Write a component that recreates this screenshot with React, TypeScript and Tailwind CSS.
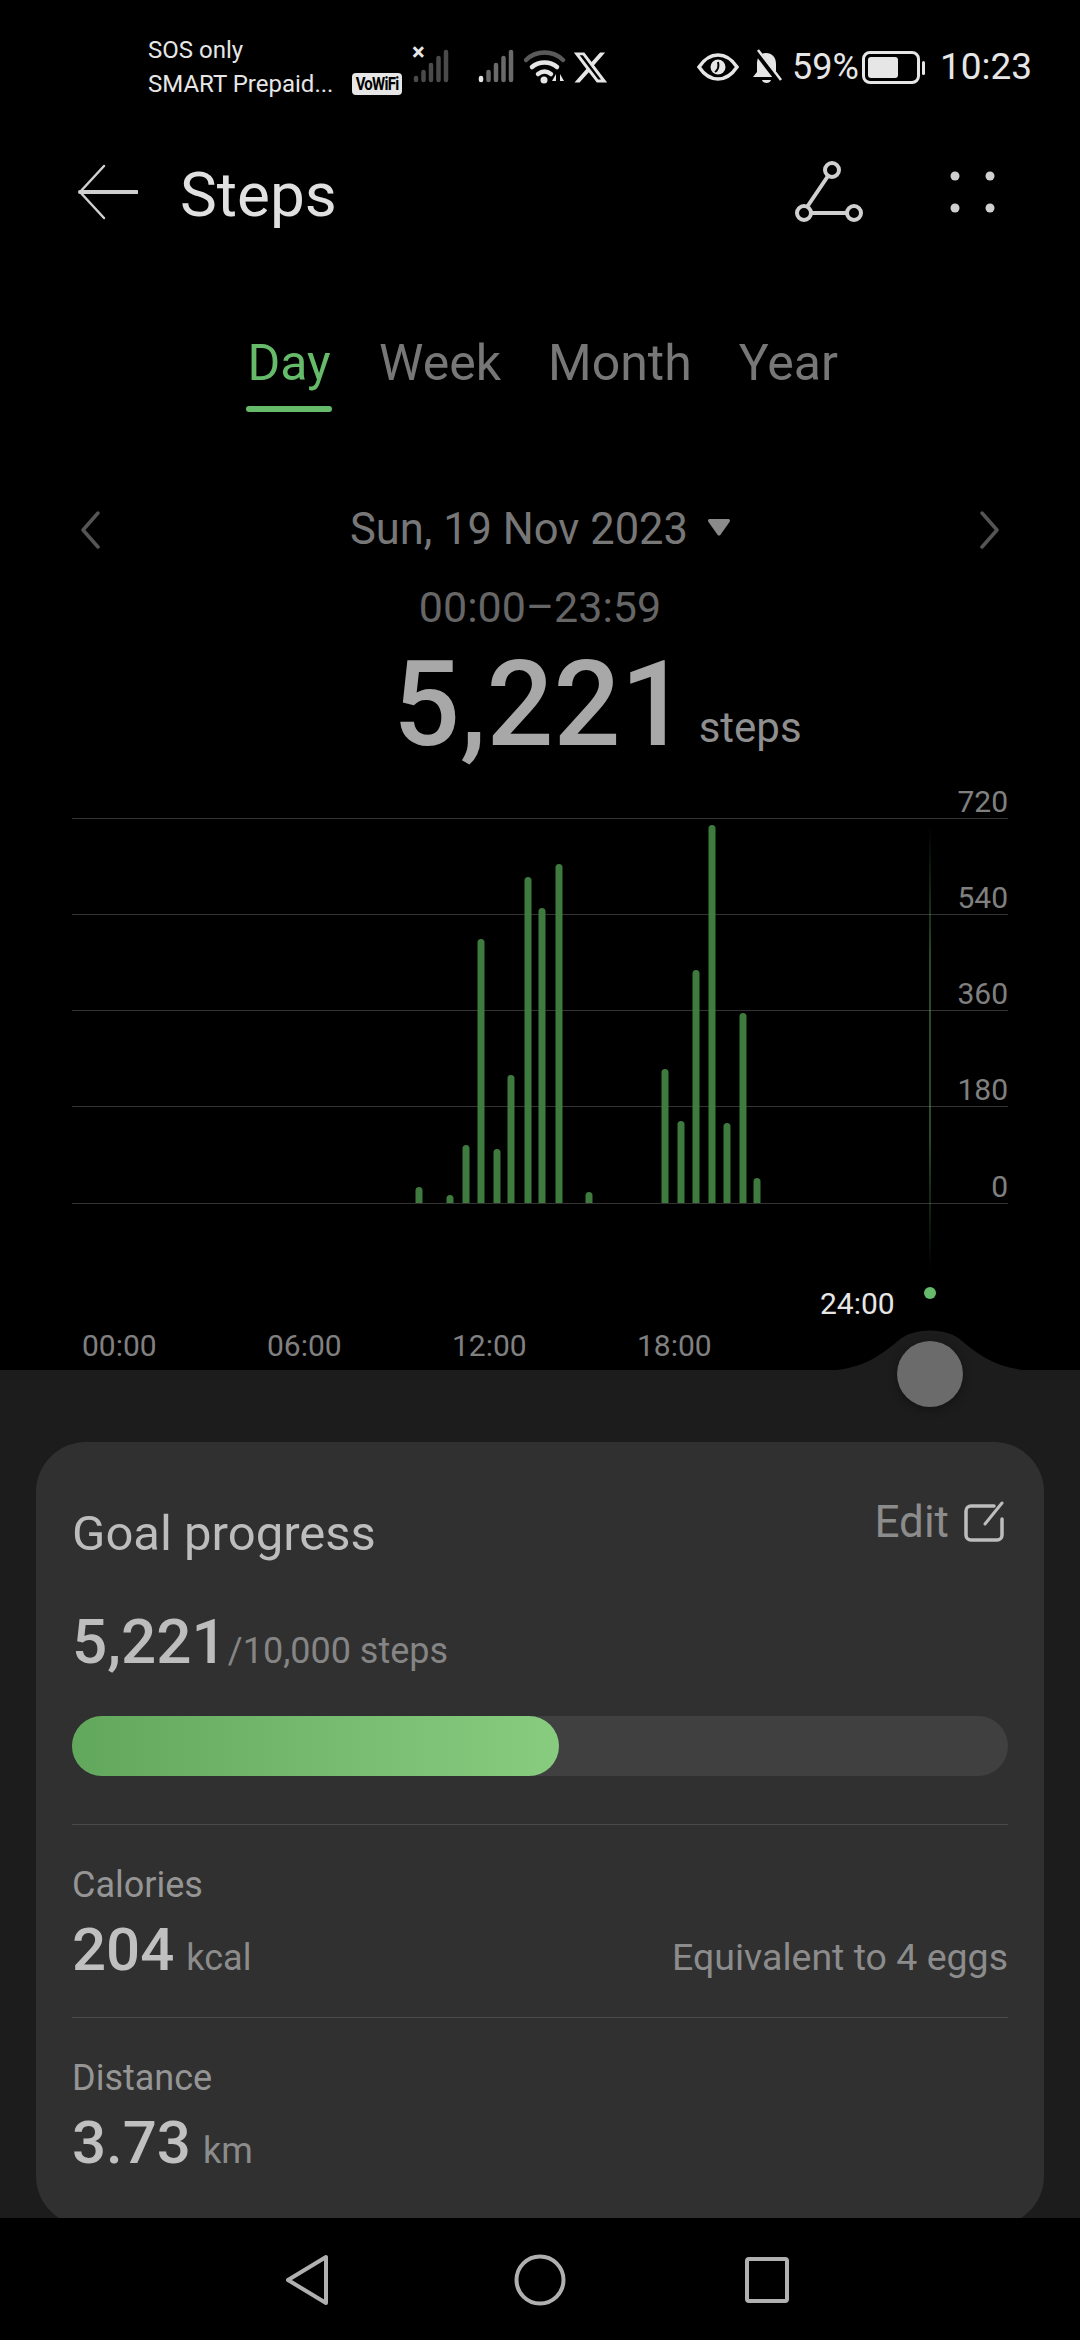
import React from 'react';

const bars: [number, number][] = [
  [419, 1187], [450, 1195], [466, 1145], [481, 939], [497, 1149], [511, 1075],
  [528, 877], [542, 908], [559, 864], [589, 1192], [665, 1069], [681, 1121],
  [696, 970], [712, 825], [727, 1123], [743, 1013], [757, 1178],
];
const grid: [number, string, number][] = [
  [818, '720', 801], [914, '540', 897], [1010, '360', 993], [1106, '180', 1089], [1203, '0', 1186],
];
const CHART_TOP = 780;

const Signal = ({ dim, first }: { dim: string; first: string }) => (
  <svg width="38" height="34" viewBox="0 0 38 34" fill="none" strokeLinecap="round" strokeWidth="4.5">
    <path d="M3 29v2" stroke={first} />
    <path d="M10.500 23v8" stroke={dim} />
    <path d="M18 16v15" stroke={dim} />
    <path d="M25.500 9v22" stroke={dim} />
    <path d="M33 3v28" stroke={dim} />
  </svg>
);

const StatusBar = () => (
  <div className="h-[130px] shrink-0 flex items-start pl-[148px] pt-[33px] text-[#e6e6e6]">
    <div className="w-[204px] text-[24px] leading-[34px]">
      <div>SOS only</div>
      <div className="whitespace-nowrap">SMART Prepaid...</div>
    </div>
    <div className="mt-[40px] w-[50px] h-[22px] rounded-[4px] bg-[#e6e6e6] text-black text-[15px] leading-[22px] font-bold text-center tracking-tighter">
      <span className="inline-block scale-y-125">VoWiFi</span>
    </div>
    <div className="relative ml-[11px] mt-[16px]">
      <Signal dim="#4a4a4a" first="#4a4a4a" />
      <span className="absolute -left-[1px] -top-[9px] text-[24px] leading-[24px] font-bold">×</span>
    </div>
    <div className="ml-[27px] mt-[16px]">
      <Signal dim="#6a6a6a" first="#e6e6e6" />
    </div>
    <svg className="ml-[8px] mt-[16px]" width="42" height="36" viewBox="0 0 42 36" fill="none" strokeLinecap="round">
      <path d="M2 11C12 1 29 1 39 11" stroke="#5a5a5a" strokeWidth="4.500" />
      <path d="M8 18c7-6 18-6 25 0" stroke="#e6e6e6" strokeWidth="4.500" />
      <path d="M14 25c4-3 9-3 13 0" stroke="#e6e6e6" strokeWidth="4.500" />
      <circle cx="20" cy="31" r="3.500" fill="#e6e6e6" />
      <path d="M32 25l-4 7h4zM36 25l4 7h-4z" fill="#e6e6e6" />
    </svg>
    <svg className="ml-[6px] mt-[16px]" width="37" height="37" viewBox="0 0 24 24" fill="#e6e6e6">
      <path d="M18.200 2.200h3.300l-7.200 8.300 8.500 11.300h-6.700l-5.200-6.800-6 6.800H1.600l7.700-8.800L1.200 2.200H8l4.700 6.200zm-1.200 17.600h1.800L7 4.100H5z" />
    </svg>
    <svg className="ml-[88px] mt-[20px]" width="42" height="28" viewBox="0 0 42 28" fill="none">
      <path d="M2 14C8 5 14 2 21 2s13 3 19 12c-6 9-12 12-19 12S8 23 2 14z" stroke="#e6e6e6" strokeWidth="3.500" />
      <circle cx="21" cy="14" r="7.500" fill="#e6e6e6" />
      <path d="M18 19c3-2 4-6 3-10" stroke="#000" strokeWidth="2" />
    </svg>
    <svg className="ml-[11px] mt-[16px]" width="33" height="36" viewBox="0 0 33 36" fill="#e6e6e6">
      <path d="M16 4c6 0 10 4 10 11v8l4 5H3l4-5v-8C7 8 10 4 16 4z" />
      <path d="M12 31h9c-1 4-8 4-9 0z" />
      <path d="M6 2l23 30" stroke="#000" strokeWidth="6" />
      <path d="M8 1l23 30" stroke="#e6e6e6" strokeWidth="2.500" />
    </svg>
    <div className="ml-[9px] mt-[14px] text-[36px] leading-[40px] w-[70px]">59%</div>
    <div className="mt-[18px] flex items-center">
      <div className="w-[58px] h-[33px] rounded-[8px] border-[3px] border-[#e6e6e6] p-[3px]">
        <div className="h-full w-[30px] rounded-[3px] bg-[#e6e6e6]" />
      </div>
      <div className="ml-[2px] w-[3px] h-[14px] rounded-full bg-[#e6e6e6]" />
    </div>
    <div className="ml-[15px] mt-[14px] text-[37px] leading-[40px]">10:23</div>
  </div>
);

const Header = () => (
  <div className="h-[124px] shrink-0 flex items-center pl-[78px] text-[#e0e0e0]">
    <svg width="60" height="56" viewBox="0 0 60 56" fill="none" stroke="#d0d0d0" strokeLinecap="round" strokeLinejoin="round">
      <path d="M2 28h57" strokeWidth="4" />
      <path d="M26 2L2 28l24 26" strokeWidth="2.500" />
    </svg>
    <div className="ml-[42px] mt-[6px] text-[62px] leading-[72px]">Steps</div>
    <svg className="ml-[458px]" width="70" height="62" viewBox="0 0 70 62" fill="none" stroke="#d0d0d0" strokeWidth="4">
      <circle cx="37" cy="9" r="7" />
      <circle cx="9" cy="52" r="7" />
      <circle cx="59" cy="52" r="7" />
      <path d="M33 15L12 46M16 52h36" />
    </svg>
    <div className="ml-[87px] grid grid-cols-2 gap-x-[29px] gap-y-[26px]">
      <div className="w-[6px] h-[6px] scale-150 rounded-full bg-[#d0d0d0]" />
      <div className="w-[6px] h-[6px] scale-150 rounded-full bg-[#d0d0d0]" />
      <div className="w-[6px] h-[6px] scale-150 rounded-full bg-[#d0d0d0]" />
      <div className="w-[6px] h-[6px] scale-150 rounded-full bg-[#d0d0d0]" />
    </div>
  </div>
);

const Tabs = () => (
  <div className="shrink-0 pt-[79px] flex justify-center gap-[47px] pl-[4px] text-[50px] leading-[60px] text-[#777777]">
    <div className="w-[86px] flex flex-col items-center text-[#66bb6a]">
      <span>Day</span>
      <div className="mt-[13px] w-full h-[6px] rounded-full bg-[#66bb6a]" />
    </div>
    <span>Week</span>
    <span>Month</span>
    <span>Year</span>
  </div>
);

const DateBlock = () => (
  <div className="shrink-0 text-[#777777]">
    <div className="mt-[90px] h-[56px] flex items-center justify-between px-[80px]">
      <svg width="20" height="38" viewBox="0 0 20 38" fill="none" stroke="#555555" strokeWidth="3.500" strokeLinecap="round" strokeLinejoin="round">
        <path d="M18 2L3 19l15 17" />
      </svg>
      <div className="flex items-center text-[43.500px] leading-[56px]">
        <span>Sun, 19 Nov 2023</span>
        <svg className="ml-[20px] -mt-[6px]" width="22" height="17" viewBox="0 0 22 17" fill="#8a8a8a">
          <path d="M2 0h18c2 0 2.500 1.500 1.500 3L13 15c-1 2-3 2-4 0L.5 3C-.5 1.500 0 0 2 0z" />
        </svg>
      </div>
      <svg width="20" height="38" viewBox="0 0 20 38" fill="none" stroke="#555555" strokeWidth="3.500" strokeLinecap="round" strokeLinejoin="round">
        <path d="M2 2l15 17L2 36" />
      </svg>
    </div>
    <div className="mt-[24px] text-center text-[43px] leading-[50px] text-[#666666]">00:00–23:59</div>
    <div className="mt-[8px] mb-[10px] h-[130px] flex items-baseline pl-[393px]">
      <span className="text-[118px] leading-[130px] font-medium text-[#a8a8a8]">5,221</span>
      <span className="ml-[11px] -translate-y-[3px] text-[42px] text-[#8f8f8f]">steps</span>
    </div>
  </div>
);

const Chart = () => (
  <div className="relative shrink-0 h-[590px]">
    <svg className="block" width="1080" height="490" viewBox={`0 ${CHART_TOP} 1080 490`}>
      <defs>
        <linearGradient id="cursor" x1="0" y1="0" x2="0" y2="1">
          <stop offset="0" stopColor="#66bb6a" stopOpacity="0" />
          <stop offset="0.3" stopColor="#66bb6a" stopOpacity="0.8" />
          <stop offset="0.7" stopColor="#66bb6a" stopOpacity="0.8" />
          <stop offset="1" stopColor="#66bb6a" stopOpacity="0" />
        </linearGradient>
      </defs>
      {grid.map(([y, label, textY]) => (
        <g key={label}>
          <rect x="72" y={y} width="936" height="1" fill="#333333" />
          <text x="1008" y={textY + 11} textAnchor="end" fontSize="30" fill="#808080">{label}</text>
        </g>
      ))}
      {bars.map(([x, top]) => (
        <path key={x} d={`M${x - 3.5} 1203V${top + 3.5}a3.5 3.5 0 0 1 7 0V1203Z`} fill="#3f7a3f" />
      ))}
      <rect x="929.500" y="825" width="1" height="445" fill="url(#cursor)" />
    </svg>
    <div className="absolute left-[820px] top-[506px] text-[30px] leading-[36px] text-[#e6e6e6]">24:00</div>
    <div className="absolute left-[924px] top-[507px] w-[12px] h-[12px] rounded-full bg-[#66bb6a]" />
    <div className="mt-[58px] pl-[82px] flex gap-[108px] text-[30px] leading-[36px] text-[#808080]">
      <span className="w-[77px]">00:00</span>
      <span className="w-[77px]">06:00</span>
      <span className="w-[77px]">12:00</span>
      <span className="w-[77px]">18:00</span>
    </div>
  </div>
);

const Metric = ({ label, value, unit, note }: { label: string; value: string; unit: string; note?: string }) => (
  <div className="border-t border-[#4a4a4a] pt-[38px] h-[193px]">
    <div className="text-[36px] leading-[44px] text-[#959595]">{label}</div>
    <div className="mt-[8px] flex items-baseline">
      <span className="text-[60px] leading-[70px] font-medium text-[#c0c0c0]">{value}</span>
      <span className="ml-[12px] text-[36px] text-[#8c8c8c]">{unit}</span>
      {note && <span className="ml-auto text-[37.500px] text-[#8c8c8c]">{note}</span>}
    </div>
  </div>
);

const Card = () => (
  <div className="mx-[36px] mt-[72px] h-[784px] shrink-0 rounded-[50px] bg-[#303030] px-[36px] pt-[60px]">
    <div className="flex items-start justify-between">
      <div className="text-[49px] leading-[64px] text-[#bdbdbd]">Goal progress</div>
      <div className="-mt-[8px] mr-[3px] flex items-center text-[44px] leading-[56px] text-[#8c8c8c]">
        <span>Edit</span>
        <svg className="ml-[14px]" width="42" height="42" viewBox="0 0 42 42" fill="none" stroke="#bdbdbd" strokeWidth="3.500" strokeLinecap="round">
          <path d="M31 5H8a5 5 0 0 0-5 5v24a5 5 0 0 0 5 5h26a5 5 0 0 0 5-5V18" />
          <path d="M22 23L39 2" strokeWidth="3" />
        </svg>
      </div>
    </div>
    <div className="mt-[38px] flex items-baseline">
      <span className="text-[62px] leading-[76px] font-medium text-[#bdbdbd]">5,221</span>
      <span className="ml-[1px] text-[36px] text-[#858585]">/10,000 steps</span>
    </div>
    <div className="mt-[36px] h-[60px] rounded-full bg-[#404040]">
      <div className="h-full w-[487px] rounded-full bg-gradient-to-r from-[#62a85c] to-[#88cc80]" />
    </div>
    <div className="mt-[48px]">
      <Metric label="Calories" value="204" unit="kcal" note="Equivalent to 4 eggs" />
      <Metric label="Distance" value="3.73" unit="km" />
    </div>
  </div>
);

const Sheet = () => (
  <div className="relative flex-1 min-h-0 bg-[#1c1c1c] flex flex-col">
    <svg className="absolute left-[820px] -top-[40px]" width="220" height="41" viewBox="0 0 220 41" fill="#1c1c1c">
      <path d="M0 41C40 41 60 26 78 11C92 -3 128 -3 142 11C160 26 180 41 220 41Z" />
    </svg>
    <div className="absolute left-[897px] -top-[29px] w-[66px] h-[66px] rounded-full bg-[#6b6b6b] shadow-[0_2px_10px_rgba(0,0,0,0.35)]" />
    <Card />
  </div>
);

const NavBar = () => (
  <div className="relative h-[122px] shrink-0 bg-black flex items-start pl-[282px] pt-[36px]">
    <svg width="50" height="52" viewBox="0 0 50 52" fill="none" stroke="#b0b0b0" strokeWidth="4" strokeLinejoin="round">
      <path d="M44 3v46L6 26z" />
    </svg>
    <svg className="ml-[182px]" width="52" height="52" viewBox="0 0 52 52" fill="none" stroke="#b0b0b0" strokeWidth="4">
      <circle cx="26" cy="26" r="23.500" />
    </svg>
    <svg className="ml-[178px] mt-[2px]" width="46" height="48" viewBox="0 0 46 48" fill="none" stroke="#b0b0b0" strokeWidth="4">
      <rect x="3" y="3" width="40" height="42" rx="2" />
    </svg>
  </div>
);

export default function App() {
  return (
    <div className="w-[1080px] h-[2340px] bg-black flex flex-col overflow-hidden font-['Roboto',sans-serif]">
      <StatusBar />
      <Header />
      <Tabs />
      <DateBlock />
      <Chart />
      <Sheet />
      <NavBar />
    </div>
  );
}
